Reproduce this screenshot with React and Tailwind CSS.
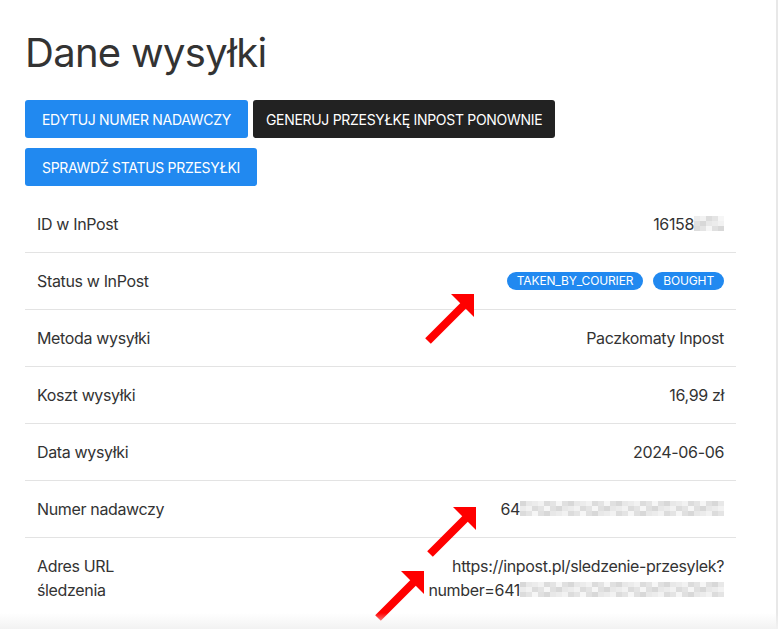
import React from "react";

const SHADES = ["#dcdcdc", "#e4e4e4", "#ececec", "#f2f2f2", "#d8d8d8", "#e8e8e8", "#f6f6f6", "#e0e0e0"];

function Mosaic({ width }) {
  const cols = Math.round(width / 6);
  const rows = 3;
  const cells = [];
  let seed = width * 7 + 3;
  for (let r = 0; r < rows; r++) {
    for (let c = 0; c < cols; c++) {
      seed = (seed * 9301 + 49297) % 233280;
      const shade = SHADES[seed % SHADES.length];
      cells.push(
        <span key={r + "-" + c} className="block" style={{ width: 6, height: 5, background: shade }} />
      );
    }
  }
  return (
    <span
      className="inline-grid align-middle -mt-[2px]"
      style={{ gridTemplateColumns: `repeat(${cols}, 6px)`, width: cols * 6 }}
    >
      {cells}
    </span>
  );
}

function Arrow({ x, y }) {
  return (
    <svg
      className="absolute pointer-events-none"
      style={{ left: x - 50, top: y - 2 }}
      width="56"
      height="56"
      viewBox="0 0 56 56"
    >
      <line x1="4" y1="49" x2="42" y2="11" stroke="#ff0000" strokeWidth="8" />
      <polygon points="27,2 50,2 50,25" fill="#ff0000" />
    </svg>
  );
}

function Row({ label, children, last }) {
  return (
    <div
      className={
        "flex justify-between px-[12px] py-[16px] text-[16px] leading-[24px] tracking-[-0.35px] text-[#333333] " +
        (last ? "" : "border-b border-[#e3e3e3]")
      }
    >
      <div className="w-[135px] shrink-0">{label}</div>
      <div className="text-right flex items-center justify-end">{children}</div>
    </div>
  );
}

export default function App() {
  return (
    <div
      className="relative w-full h-[629px] overflow-hidden bg-[#e8e8e8]"
      style={{ fontFamily: "Inter, 'Noto Sans', sans-serif" }}
    >
      <div className="w-[776px] h-[629px] bg-white pl-[25px] pr-[40px] pt-[28px]">
        <h1 className="text-[40px] leading-[50px] text-[#333333] font-normal tracking-[-0.7px]">Dane wysyłki</h1>
        <div className="flex flex-wrap gap-x-[5px] gap-y-[10px] mt-[22px]">
          <button className="h-[38px] px-[17px] rounded-[3px] bg-[#2189f0] text-white text-[14px] uppercase tracking-[-0.3px]">
            Edytuj numer nadawczy
          </button>
          <button className="h-[38px] px-[13px] rounded-[3px] bg-[#222222] text-white text-[14px] uppercase tracking-[-0.3px]">
            Generuj przesyłkę InPost ponownie
          </button>
          <button className="h-[38px] px-[17px] rounded-[3px] bg-[#2189f0] text-white text-[14px] uppercase tracking-[-0.3px]">
            Sprawdź status przesyłki
          </button>
        </div>
        <div className="mt-[10px]">
          <Row label="ID w InPost">
            <span>16158</span>
            <Mosaic width={30} />
          </Row>
          <Row label="Status w InPost">
            <div className="flex gap-[10px]">
              <span className="h-[18px] px-[10px] rounded-full bg-[#2189f0] text-white text-[12px] leading-[18px] tracking-[-0.15px]">
                TAKEN_BY_COURIER
              </span>
              <span className="h-[18px] px-[10px] rounded-full bg-[#2189f0] text-white text-[12px] leading-[18px] tracking-[-0.15px]">
                BOUGHT
              </span>
            </div>
          </Row>
          <Row label="Metoda wysyłki">Paczkomaty Inpost</Row>
          <Row label="Koszt wysyłki">16,99 zł</Row>
          <Row label="Data wysyłki">2024-06-06</Row>
          <Row label="Numer nadawczy">
            <span>64</span>
            <Mosaic width={204} />
          </Row>
          <Row label="Adres URL śledzenia" last>
            <div className="flex flex-col items-end">
              <span>https://inpost.pl/sledzenie-przesylek?</span>
              <span className="flex items-center">
                <span>number=641</span>
                <Mosaic width={204} />
              </span>
            </div>
          </Row>
        </div>
      </div>

      <Arrow x={474} y={294} />
      <Arrow x={476} y={507} />
      <Arrow x={424} y={571} />

      <div className="absolute left-0 right-0 bottom-0 h-[16px] bg-gradient-to-t from-[#f2f2f2] to-transparent pointer-events-none" />
    </div>
  );
}
